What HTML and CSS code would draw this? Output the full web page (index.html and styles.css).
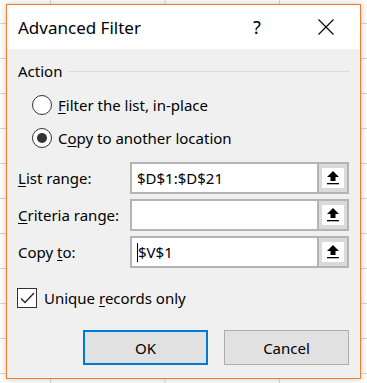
FILE: index.html
```html
<!DOCTYPE html>
<html lang="en">
<head>
    <meta charset="UTF-8">
    <title>Advanced Filter</title>
    <link rel="stylesheet" href="styles.css">
</head>
<body>
    <div class="dialog">
        <div class="titlebar">
            <span class="title">Advanced Filter</span>
            <span class="tb-btn help">?</span>
            <span class="tb-btn close">
                <svg width="16" height="16" viewBox="0 0 16 16"><path d="M0.5 0.5 L15.5 15.5 M15.5 0.5 L0.5 15.5" stroke="#000" stroke-width="1.1" fill="none"/></svg>
            </span>
        </div>

        <div class="content">
            <div class="group-head">
                <span>Action</span>
                <span class="group-line"></span>
            </div>

            <div class="radios">
                <div class="radio-row">
                    <span class="radio"></span>
                    <span><u>F</u>ilter the list, in-place</span>
                </div>
                <div class="radio-row">
                    <span class="radio checked"></span>
                    <span>C<u>o</u>py to another location</span>
                </div>
            </div>

            <div class="fields">
                <div class="field-row">
                    <label class="field-label"><u>L</u>ist range:</label>
                    <div class="field-input">$D$1:$D$21</div>
                    <span class="ref-btn"><span class="ref-inner"><svg width="12" height="14" viewBox="0 0 12 14"><polygon points="6,0 12,6 8.5,6 8.5,10 3.5,10 3.5,6 0,6" fill="#000"/><rect x="0" y="12" width="12" height="1.3" fill="#000"/></svg></span></span>
                </div>
                <div class="field-row">
                    <label class="field-label"><u>C</u>riteria range:</label>
                    <div class="field-input"></div>
                    <span class="ref-btn"><span class="ref-inner"><svg width="12" height="14" viewBox="0 0 12 14"><polygon points="6,0 12,6 8.5,6 8.5,10 3.5,10 3.5,6 0,6" fill="#000"/><rect x="0" y="12" width="12" height="1.3" fill="#000"/></svg></span></span>
                </div>
                <div class="field-row">
                    <label class="field-label">Copy <u>t</u>o:</label>
                    <div class="field-input"><span class="caret"></span>$V$1</div>
                    <span class="ref-btn"><span class="ref-inner"><svg width="12" height="14" viewBox="0 0 12 14"><polygon points="6,0 12,6 8.5,6 8.5,10 3.5,10 3.5,6 0,6" fill="#000"/><rect x="0" y="12" width="12" height="1.3" fill="#000"/></svg></span></span>
                </div>
            </div>

            <div class="check-row">
                <span class="checkbox">
                    <svg width="15" height="12" viewBox="0 0 15 12"><path d="M1 6.5 L5 10.5 L14 1" stroke="#222" stroke-width="1.3" fill="none"/></svg>
                </span>
                <span>Unique <u>r</u>ecords only</span>
            </div>

            <div class="buttons">
                <button class="btn btn-default">OK</button>
                <button class="btn">Cancel</button>
            </div>
        </div>
    </div>
</body>
</html>
```

FILE: styles.css
```css
body {
    margin: 0;
    width: 367px;
    height: 383px;
    overflow: hidden;
    font-family: "Noto Sans", "Open Sans", sans-serif;
    font-size: 15px;
    color: #000;
    background-color: #fff;
    background-image:
        linear-gradient(to right, #d6d6d6 1px, transparent 1px),
        linear-gradient(to bottom, #d6d6d6 1px, transparent 1px);
    background-size: 114.5px 100%, 100% 35px;
    background-position: 50px 0, 0 23px;
}
u {
    text-decoration-thickness: 1px;
    text-underline-offset: 2px;
}
.dialog {
    box-sizing: border-box;
    width: 355px;
    margin: 4px 0 0 6px;
    border: 1px solid #f47b2a;
    background-color: #f0f0f0;
    box-shadow: 0 0 7px rgba(0,0,0,0.22);
}
.titlebar {
    display: flex;
    align-items: center;
    height: 44px;
    padding-left: 11px;
    background-color: #fff;
}
.title {
    flex: 1;
    font-size: 17px;
}
.tb-btn {
    display: flex;
    align-items: center;
    justify-content: center;
    width: 46px;
    height: 44px;
}
.help {
    font-size: 18px;
    margin-right: 23px;
}
.close {
    margin-right: 11px;
}
.content {
    padding: 12px 11px 13px 11px;
}
.group-head {
    display: flex;
    align-items: center;
    height: 20px;
}
.group-line {
    flex: 1;
    height: 1px;
    margin-left: 6px;
    margin-right: -1px;
    background-color: #dcdcdc;
}
.radios {
    margin-top: 7px;
}
.radio-row {
    display: flex;
    align-items: center;
    height: 33px;
    padding-left: 14px;
}
.radio {
    box-sizing: border-box;
    width: 20px;
    height: 20px;
    margin-right: 6px;
    border: 1px solid #333;
    border-radius: 50%;
    background-color: #fff;
    display: flex;
    align-items: center;
    justify-content: center;
}
.radio.checked::after {
    content: "";
    width: 10px;
    height: 10px;
    border-radius: 50%;
    background-color: #333;
}
.fields {
    margin-top: 8px;
    display: flex;
    flex-direction: column;
    gap: 5px;
}
.field-row {
    display: flex;
    align-items: center;
    height: 32px;
}
.field-label {
    width: 112px;
}
.field-input {
    box-sizing: border-box;
    flex: 1;
    height: 32px;
    display: flex;
    align-items: center;
    padding-left: 5px;
    border: 2px solid #b4b4b4;
    border-right: none;
    background-color: #fff;
}
.caret {
    width: 1px;
    height: 19px;
    background-color: #000;
}
.ref-btn {
    box-sizing: border-box;
    width: 32px;
    height: 32px;
    border: 2px solid #b4b4b4;
    background-color: #dadada;
    display: flex;
    align-items: center;
    justify-content: center;
}
.ref-inner {
    width: 22px;
    height: 20px;
    background-color: #fff;
    display: flex;
    align-items: center;
    justify-content: center;
}
.check-row {
    display: flex;
    align-items: center;
    height: 20px;
    margin-top: 20px;
}
.checkbox {
    box-sizing: border-box;
    width: 20px;
    height: 20px;
    margin-left: -1px;
    margin-right: 7px;
    border: 1px solid #333;
    background-color: #fff;
    display: flex;
    align-items: center;
    justify-content: center;
}
.buttons {
    display: flex;
    justify-content: flex-end;
    gap: 16px;
    margin-top: 22px;
}
.btn {
    box-sizing: border-box;
    width: 125px;
    height: 35px;
    font-family: inherit;
    font-size: 15px;
    color: #000;
    background-color: #e1e1e1;
    border: 1px solid #adadad;
    padding: 0;
}
.btn-default {
    border: 2px solid #0078d7;
}
```
